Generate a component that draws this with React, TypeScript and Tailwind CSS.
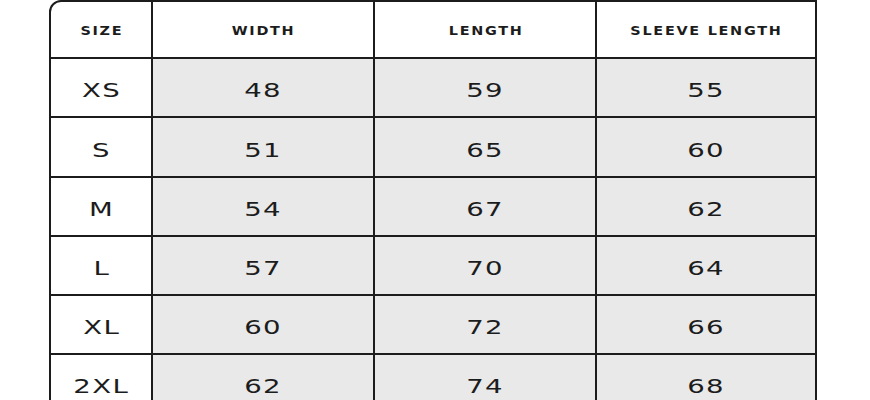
import React from "react";

const rows = [
  ["XS", "48", "59", "55"],
  ["S", "51", "65", "60"],
  ["M", "54", "67", "62"],
  ["L", "57", "70", "64"],
  ["XL", "60", "72", "66"],
  ["2XL", "62", "74", "68"],
];

const headers = ["SIZE", "WIDTH", "LENGTH", "SLEEVE LENGTH"];
const widths = ["w-[102px]", "w-[222px]", "w-[222px]", "w-[218px]"];

export default function App() {
  return (
    <div className="w-[870px] h-[400px] overflow-hidden bg-white font-['DejaVu_Sans',sans-serif]">
      <div className="ml-[49px] w-[768px] border-2 border-[#1c1c1c] rounded-tl-[12px] overflow-hidden text-[#1c1c1c]">
        <div className="flex h-[57px]">
          {headers.map((h, i) => (
            <div
              key={h}
              className={`${widths[i]} flex items-center justify-center border-b-2 border-[#1c1c1c] ${i < 3 ? "border-r-2" : ""} text-[12px] font-bold tracking-[0.12em] pl-[0.12em] pt-[2px]`}
            >
              <span className="inline-block scale-x-[1.2]">{h}</span>
            </div>
          ))}
        </div>
        {rows.map((r, ri) => (
          <div key={ri} className={`flex ${ri === 1 ? "h-[60px]" : "h-[59px]"}`}>
            {r.map((c, i) => (
              <div
                key={i}
                className={`${widths[i]} flex items-center justify-center border-b-2 border-[#1c1c1c] ${i < 3 ? "border-r-2" : ""} ${i === 0 ? "bg-white" : "bg-[#e9e9e9]"} text-[19px] tracking-[0.05em] pl-[0.05em] pt-[6px]`}
              >
                <span className="inline-block scale-x-[1.45]">{c}</span>
              </div>
            ))}
          </div>
        ))}
      </div>
    </div>
  );
}
